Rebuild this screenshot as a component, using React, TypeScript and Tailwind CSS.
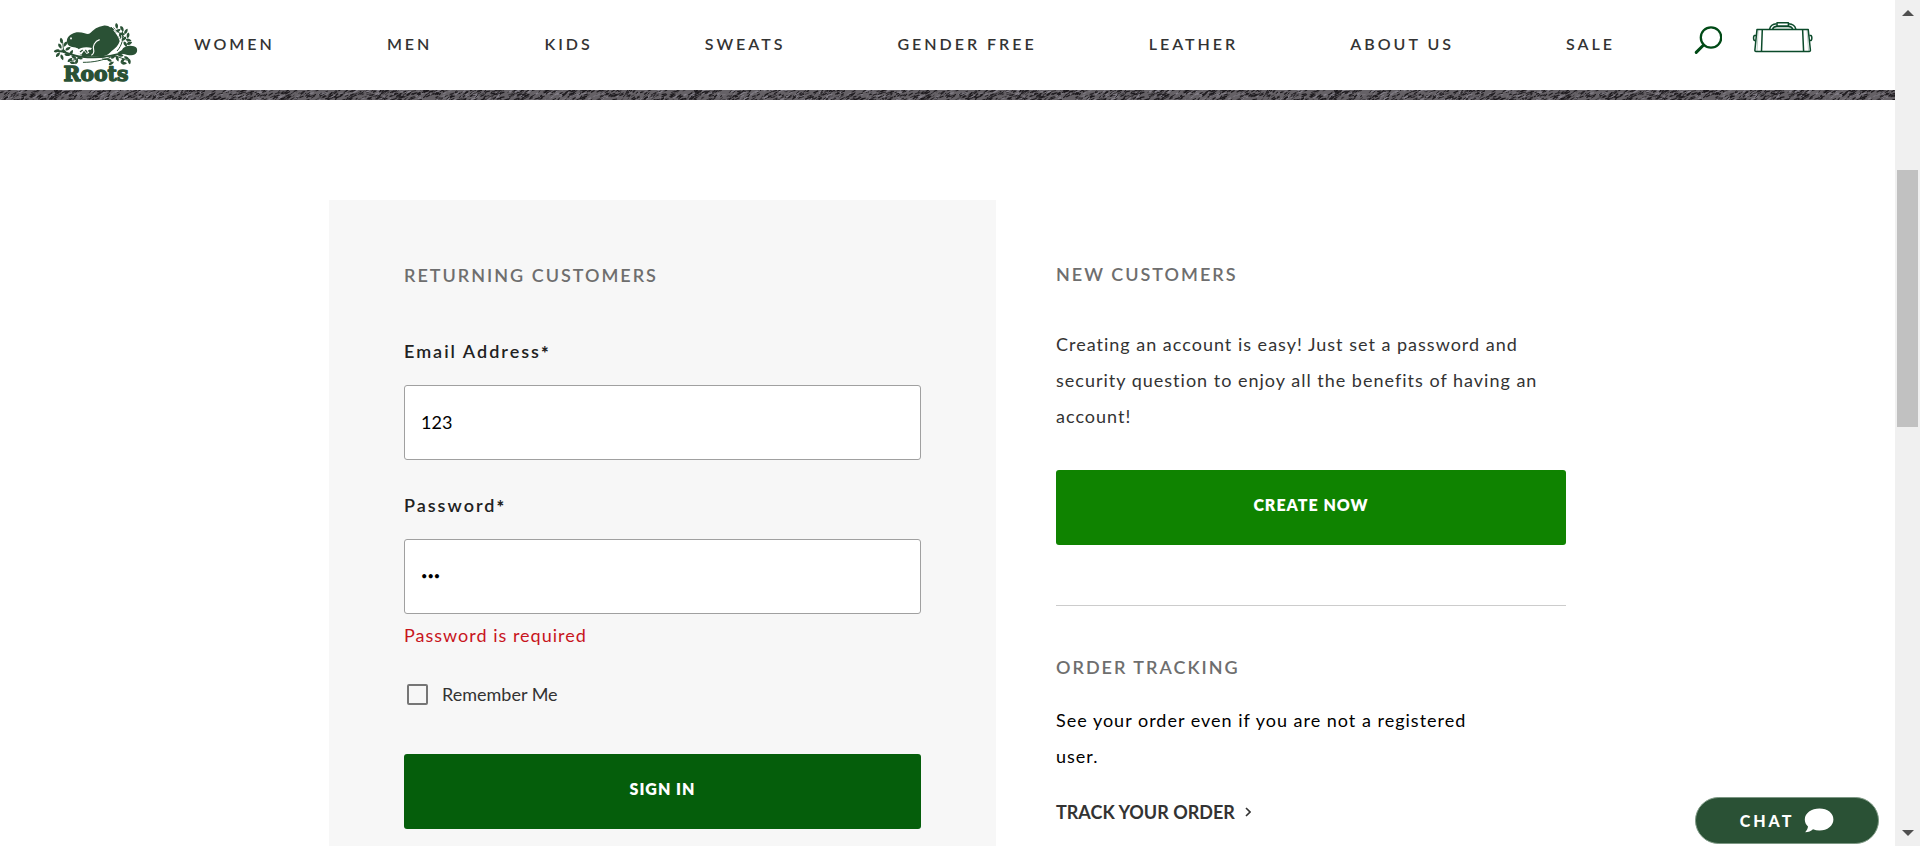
import type { ReactNode } from "react";

const NAV_ITEMS = ["WOMEN", "MEN", "KIDS", "SWEATS", "GENDER FREE", "LEATHER", "ABOUT US", "SALE"];

// Leaves around the beaver: x, y, rotation in degrees.
const LEAVES: [number, number, number][] = [
  [20, 92, -20], [30, 78, 60], [34, 62, 80], [46, 72, 120], [24, 104, -50], [42, 94, 30],
  [54, 86, -30], [36, 112, 70], [52, 104, 10], [64, 98, -60],
  [60, 120, -40], [72, 112, 30], [80, 124, -70], [90, 114, 20], [68, 128, 10],
  [188, 26, 20], [200, 18, 80], [204, 32, -30], [216, 26, 60], [228, 34, -60], [234, 46, 100],
  [216, 42, 10], [222, 56, -40], [236, 60, 20], [210, 50, 80], [238, 70, -20], [226, 72, 60],
  [178, 120, 30], [190, 110, -40], [202, 116, 70], [212, 106, 10], [218, 122, -50], [230, 114, 30],
  [238, 124, 80], [222, 130, 0], [184, 130, -30], [164, 116, 10],
];

function RootsLogo() {
  return (
    <svg viewBox="0 0 276 198" className="w-[92px] shrink-0" role="img" aria-label="Roots">
      <g fill="#2a5135">
        <g fill="none" stroke="#2a5135" strokeWidth="3" strokeLinecap="round">
          <path d="M16 94 C40 88 60 108 96 110 C130 114 180 112 232 94" strokeWidth="6" />
          <path d="M36 60 C42 76 36 90 46 98" />
          <path d="M202 92 C216 76 222 56 216 24" />
          <path d="M186 26 C206 34 226 50 238 72" />
          <path d="M100 127 C130 127 156 122 190 108 C206 108 222 120 238 122" />
          <path d="M58 122 C72 122 84 116 96 110" />
        </g>
        {LEAVES.map(([x, y, r]) => (
          <path
            key={`${x}-${y}`}
            d="M-9 0 C-5 -6 4 -5 9 0 C4 5 -5 6 -9 0Z"
            transform={`translate(${x} ${y}) rotate(${r})`}
          />
        ))}
        <path d="M216 90 C222 74 252 74 260 84 C264 94 260 105 244 106 C232 107 222 100 202 98 Z" />
        <path d="M51 66 C49 54 58 46 66 42 C76 35 92 36 104 40 C110 42 116 43 120 40 C130 28 144 19 160 17 C176 14 186 26 194 36 C202 46 208 56 209 64 C206 76 196 86 184 94 C176 104 162 112 144 109 L100 110 L84 98 C92 88 84 84 72 82 C60 80 52 76 51 66Z" />
        <path d="M180 16 C194 26 208 46 213 64 C207 78 197 88 185 97" fill="none" stroke="#fff" strokeWidth="3" />
        <path d="M149 59 C134 64 127 78 131 90 C133 98 130 102 124 106" fill="none" stroke="#fff" strokeWidth="3.5" />
        <path d="M82 92 C90 82 108 80 126 84 L122 90 C114 88 112 92 118 98 L110 102 L102 92 L94 104 L84 100Z" fill="#fff" />
        <path d="M90 96 L98 90 M106 90 L112 98" stroke="#2a5135" strokeWidth="4" />
        <path d="M100 120 C126 121 150 118 176 112" fill="none" stroke="#fff" strokeWidth="2" />
        <ellipse cx="63" cy="55" rx="2.5" ry="3.5" fill="#fff" />
        <text
          x="138"
          y="184"
          textAnchor="middle"
          fontSize="61"
          fontWeight="700"
          stroke="#2a5135"
          strokeWidth="4"
          strokeLinejoin="round"
          fontFamily="'DejaVu Serif', serif"
        >
          Roots
        </text>
      </g>
    </svg>
  );
}

function SearchIcon() {
  return (
    <svg viewBox="0 0 28 30" className="w-7" fill="none" stroke="#004a16" aria-hidden="true">
      <circle cx="17" cy="12.5" r="10.2" strokeWidth="2.3" />
      <path d="M9.6 20 L2.2 27.4" strokeWidth="3" strokeLinecap="round" />
    </svg>
  );
}

function BagIcon() {
  return (
    <svg viewBox="0 0 62 32" className="w-[62px]" fill="none" stroke="#0b4a2a" strokeWidth="1.5" strokeLinejoin="round" aria-hidden="true">
      <path d="M5 8.4 H56.2 L58.4 29 Q58.5 30.4 57.2 30.4 H4 Q2.7 30.4 2.9 29 Z" />
      <path d="M10.3 8.4 L9.5 30.4 M50.6 8.4 L51.6 30.4" />
      <path d="M6.2 9 L5 30 M55 9 L56.6 30" strokeWidth="0.5" strokeOpacity="0.5" />
      <path d="M17.6 8.2 C18.4 4.4 20.6 3 24.6 2.8 M43.8 8.2 C43 4.4 40.6 3 36.6 2.8" />
      <path d="M20.6 8.2 C21.2 6.2 22.4 5.4 24.8 5.2 H36.4 C38.8 5.4 40 6.2 40.8 8.2" />
      <path d="M25 1.7 H36.4 V5.2 H25 Z" />
      <path d="M22 6.8 H39.4" strokeWidth="0.6" strokeOpacity="0.6" />
      <path d="M4 14.4 H2.2 L1.6 16 V18 L2.2 19.4 H3.6 M57.4 14.4 H59.2 L59.8 16 V18 L59.2 19.4 H57.8" strokeWidth="1.5" />
    </svg>
  );
}

// Salt-and-pepper knit: rows of short slanted stitches with a few lighter flecks.
const STITCHES = (() => {
  let seed = 7;
  const next = () => {
    seed = (seed * 16807) % 2147483647;
    return seed / 2147483647;
  };
  return Array.from({ length: 1100 }, (_, i) => {
    const x = next() * 640;
    const y = (i % 4) * 2.6 + 1 + next() * 2;
    const dx = 1.5 + next() * 3.5;
    const dy = -(0.8 + next() * 1.8);
    return { x, y, dx, dy, w: 0.5 + next() * 0.8, dark: next() > 0.25 };
  });
})();

function KnitStripe() {
  return (
    <svg className="h-2.5 w-full shrink-0" aria-hidden="true">
      <defs>
        <pattern id="knit" width="640" height="10" patternUnits="userSpaceOnUse">
          <rect width="640" height="10" fill="#656166" />
          {STITCHES.map((s, i) => (
            <path
              key={i}
              d={`M${s.x} ${s.y} l${s.dx} ${s.dy}`}
              stroke={s.dark ? "#1b181c" : "#85818a"}
              strokeWidth={s.w}
            />
          ))}
        </pattern>
      </defs>
      <rect width="100%" height="10" fill="url(#knit)" />
    </svg>
  );
}

function SectionTitle({ children }: { children: ReactNode }) {
  return <h2 className="text-lg leading-6 font-semibold tracking-[2px] text-[#6e6e6e]">{children}</h2>;
}

function Field({ id, label, type, value }: { id: string; label: string; type: string; value: string }) {
  return (
    <div>
      <label htmlFor={id} className="flex items-center text-lg leading-6 font-semibold tracking-[2px] text-[#222]">
        {label}
        <span className="pt-1 text-lg leading-5 font-black">*</span>
      </label>
      <input
        id={id}
        type={type}
        defaultValue={value}
        className="mt-[22px] block h-[75px] w-full rounded-[3px] border border-[#a0a0a0] bg-white px-4 pb-0.5 text-lg text-black outline-none [&[type=password]]:text-[11px]"
      />
    </div>
  );
}

function Header() {
  return (
    <header className="shrink-0 bg-white">
      <div className="flex h-[90px] items-start pr-[81px] pl-[50px]">
        <a href="#home" className="mt-5 shrink-0">
          <RootsLogo />
        </a>
        <nav className="mr-[79px] ml-[52px] flex flex-1 justify-between pt-8 text-base leading-6 font-semibold tracking-[3px] whitespace-nowrap text-[#333]">
          {NAV_ITEMS.map((item) => (
            <a key={item} href="#nav">
              {item}
            </a>
          ))}
        </nav>
        <div className="flex items-start gap-[30px]">
          <button type="button" aria-label="Search" className="pt-[25px]">
            <SearchIcon />
          </button>
          <a href="#bag" aria-label="Shopping bag" className="pt-[21px]">
            <BagIcon />
          </a>
        </div>
      </div>
      <KnitStripe />
    </header>
  );
}

function Scrollbar() {
  return (
    <div className="flex w-[25px] shrink-0 flex-col items-center bg-[#f0f0f0] py-2.5" aria-hidden="true">
      <svg viewBox="0 0 12 6" className="w-3" fill="#505050">
        <path d="M0 6 L6 0 L12 6Z" />
      </svg>
      <div className="flex w-full flex-1 flex-col px-0.5">
        <div className="flex-[154]" />
        <div className="flex-[257] bg-[#c1c1c1]" />
        <div className="flex-[403]" />
      </div>
      <svg viewBox="0 0 12 6" className="w-3" fill="#505050">
        <path d="M0 0 L6 6 L12 0Z" />
      </svg>
    </div>
  );
}

export default function App() {
  return (
    <div className="flex h-screen overflow-hidden bg-white font-['Lato',sans-serif]">
      <div className="relative flex min-w-0 flex-1 flex-col overflow-hidden">
        <Header />
        <main className="mx-auto grid w-full max-w-[1237px] grid-cols-[667fr_510fr] gap-[60px] pt-[100px]">
          <form className="bg-[#f7f7f7] px-[75px] pt-[63px] pb-20">
            <SectionTitle>RETURNING CUSTOMERS</SectionTitle>
            <div className="mt-[52px] flex flex-col gap-[33px]">
              <Field id="email" label="Email Address" type="text" value="123" />
              <Field id="password" label="Password" type="password" value="123" />
            </div>
            <p className="mt-[9px] text-lg leading-6 tracking-[1px] text-[#c8151d]">Password is required</p>
            <label className="mt-[35px] flex items-center gap-3.5 pl-[3px] text-lg leading-6 text-[#333]">
              <input type="checkbox" className="size-[21px] appearance-none rounded-[2px] border-2 border-[#767676]" />
              Remember Me
            </label>
            <button
              type="button"
              className="mt-12 h-[75px] w-full rounded-[3px] bg-[#055e0b] pb-1.5 text-base font-extrabold tracking-[1px] text-white"
            >
              SIGN IN
            </button>
          </form>
          <div className="pt-[62px]">
            <SectionTitle>NEW CUSTOMERS</SectionTitle>
            <p className="mt-10 text-lg leading-9 tracking-[1px] text-[#333]">
              Creating an account is easy! Just set a password and security question to enjoy all the benefits of having an
              account!
            </p>
            <button
              type="button"
              className="mt-9 h-[75px] w-full rounded-[3px] bg-[#0f8300] pb-1.5 text-base font-extrabold tracking-[1px] text-white"
            >
              CREATE NOW
            </button>
            <hr className="mt-[60px] mb-[49px] border-[#ccc]" />
            <SectionTitle>ORDER TRACKING</SectionTitle>
            <p className="mt-[23px] max-w-[430px] text-lg leading-9 tracking-[1px] text-black">
              See your order even if you are not a registered user.
            </p>
            <a href="#track" className="mt-[26px] flex items-center gap-2.5 text-lg leading-6 font-bold text-[#333]">
              TRACK YOUR ORDER
              <svg viewBox="0 0 6 10" className="w-1.5" fill="none" stroke="#333" strokeWidth="1.6" aria-hidden="true">
                <path d="M1 1 L5 5 L1 9" />
              </svg>
            </a>
          </div>
        </main>
        <button
          type="button"
          className="absolute right-4 bottom-0.5 flex h-[47px] w-[184px] items-center justify-center gap-2.5 rounded-full border border-[#7c9783] bg-[#2a5135] text-base font-black tracking-[3px] text-white"
        >
          CHAT
          <svg viewBox="0 0 30 25" className="w-[30px]" fill="#fff" aria-hidden="true">
            <path d="M15.5 0.6 C23.5 0.6 29.4 5.2 29.4 11.4 C29.4 17.6 23.5 22.4 15.5 22.4 C13.2 22.4 11 22 9 21.2 C7 23 4.4 24.2 1.2 24.2 C2.8 22.6 3.8 20.8 4 18.6 C2 16.6 0.8 14.2 0.8 11.4 C0.8 5.2 7.5 0.6 15.5 0.6Z" />
          </svg>
        </button>
      </div>
      <Scrollbar />
    </div>
  );
}
